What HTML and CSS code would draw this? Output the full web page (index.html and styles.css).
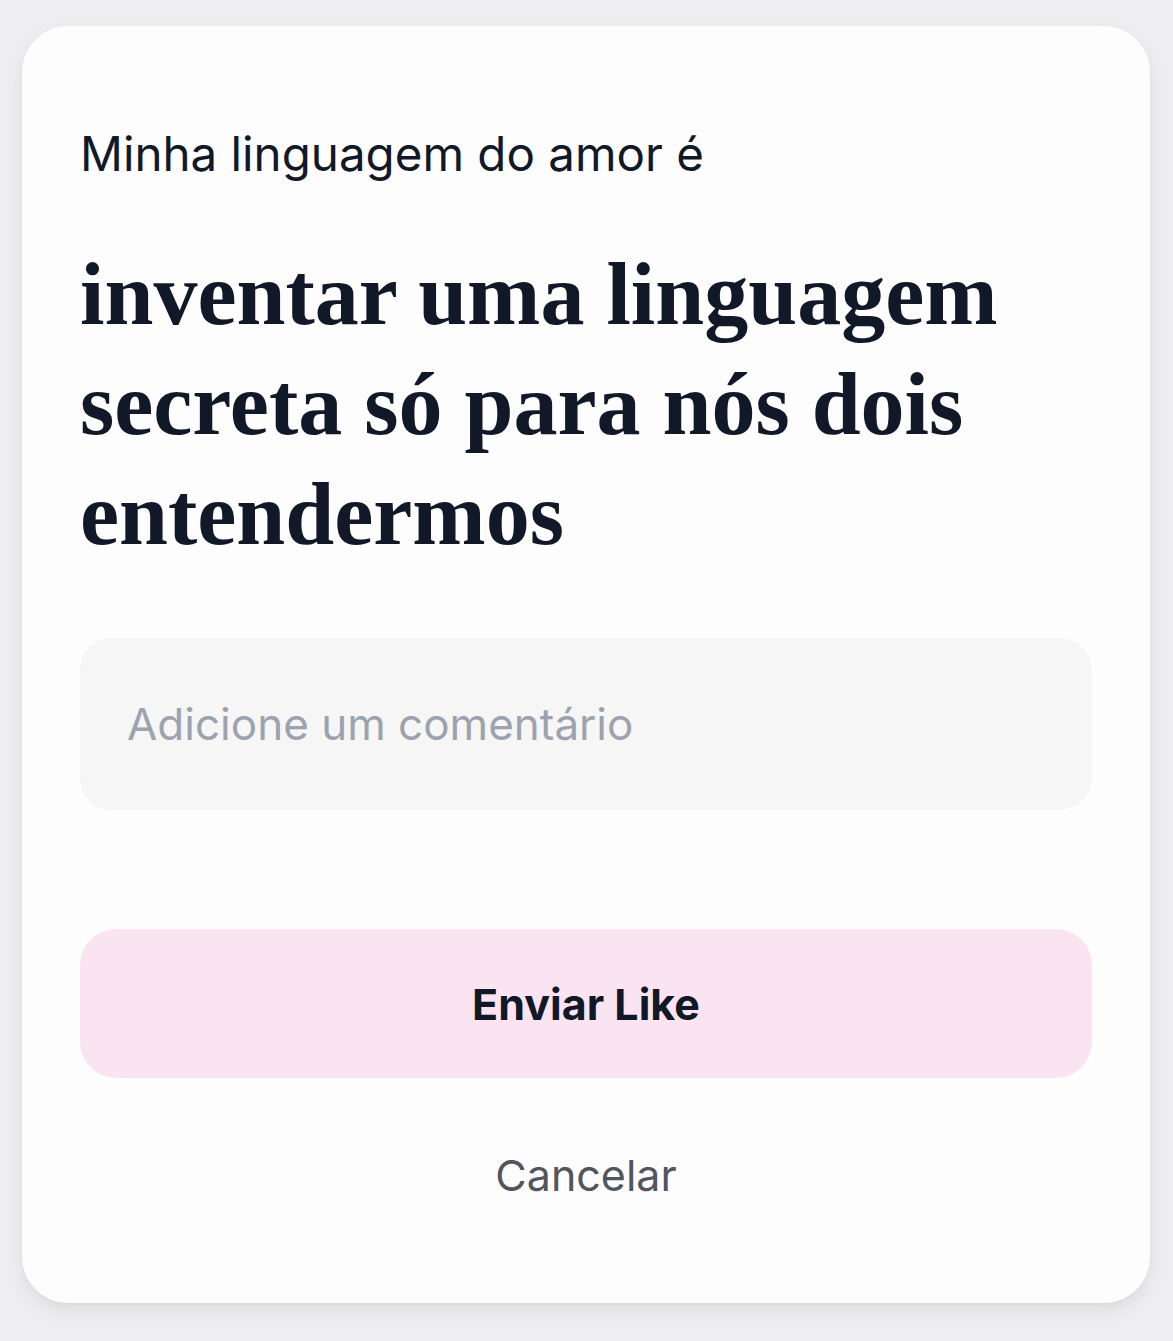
FILE: index.html
```html
<!DOCTYPE html>
<html lang="pt-BR">
<head>
<meta charset="utf-8">
<title>Enviar Like</title>
<link rel="stylesheet" href="styles.css">
</head>
<body>
  <div class="card">
    <p class="label">Minha linguagem do amor é</p>
    <h1 class="answer">inventar uma linguagem secreta só para nós dois entendermos</h1>
    <input class="comment" type="text" placeholder="Adicione um comentário">
    <button class="send" type="button">Enviar Like</button>
    <button class="cancel" type="button">Cancelar</button>
  </div>
</body>
</html>
```

FILE: styles.css
```css
html, body {
  margin: 0;
  padding: 0;
}

body {
  background: #eeeef0;
  padding: 26px 23px 38px 22px;
  font-family: Inter, "Noto Sans", sans-serif;
  color: #111827;
}

.card {
  box-sizing: border-box;
  height: 1277px;
  background: #fdfdfd;
  border-radius: 46px;
  box-shadow: 0 8px 18px rgba(0, 0, 0, 0.07), 0 1px 3px rgba(0, 0, 0, 0.04);
  padding: 98px 58px 98px 58px;
  display: flex;
  flex-direction: column;
}

.label {
  margin: 0;
  font-size: 47.5px;
  line-height: 60px;
  font-weight: 400;
  color: #111827;
}

.answer {
  margin: 56px 0 0 0;
  font-family: "Liberation Serif", "DejaVu Serif", serif;
  font-weight: 700;
  font-size: 88px;
  line-height: 110px;
  color: #111827;
  letter-spacing: 0;
}

.comment {
  margin-top: 68px;
  box-sizing: border-box;
  height: 172px;
  width: 100%;
  border: none;
  outline: none;
  border-radius: 32px;
  background: #f6f6f7;
  padding: 0 47px;
  font-family: Inter, "Noto Sans", sans-serif;
  font-size: 44px;
  color: #111827;
}

.comment::placeholder {
  color: #9ca3af;
}

.send {
  margin-top: 119px;
  height: 149px;
  width: 100%;
  border: none;
  border-radius: 36px;
  background: #fbe4f1;
  font-family: Inter, "Noto Sans", sans-serif;
  font-size: 43px;
  font-weight: 700;
  color: #111827;
  cursor: pointer;
}

.cancel {
  margin-top: 67px;
  height: 60px;
  align-self: center;
  border: none;
  background: transparent;
  padding: 0;
  font-family: Inter, "Noto Sans", sans-serif;
  font-size: 43px;
  line-height: 60px;
  color: #52555d;
  cursor: pointer;
}
```
